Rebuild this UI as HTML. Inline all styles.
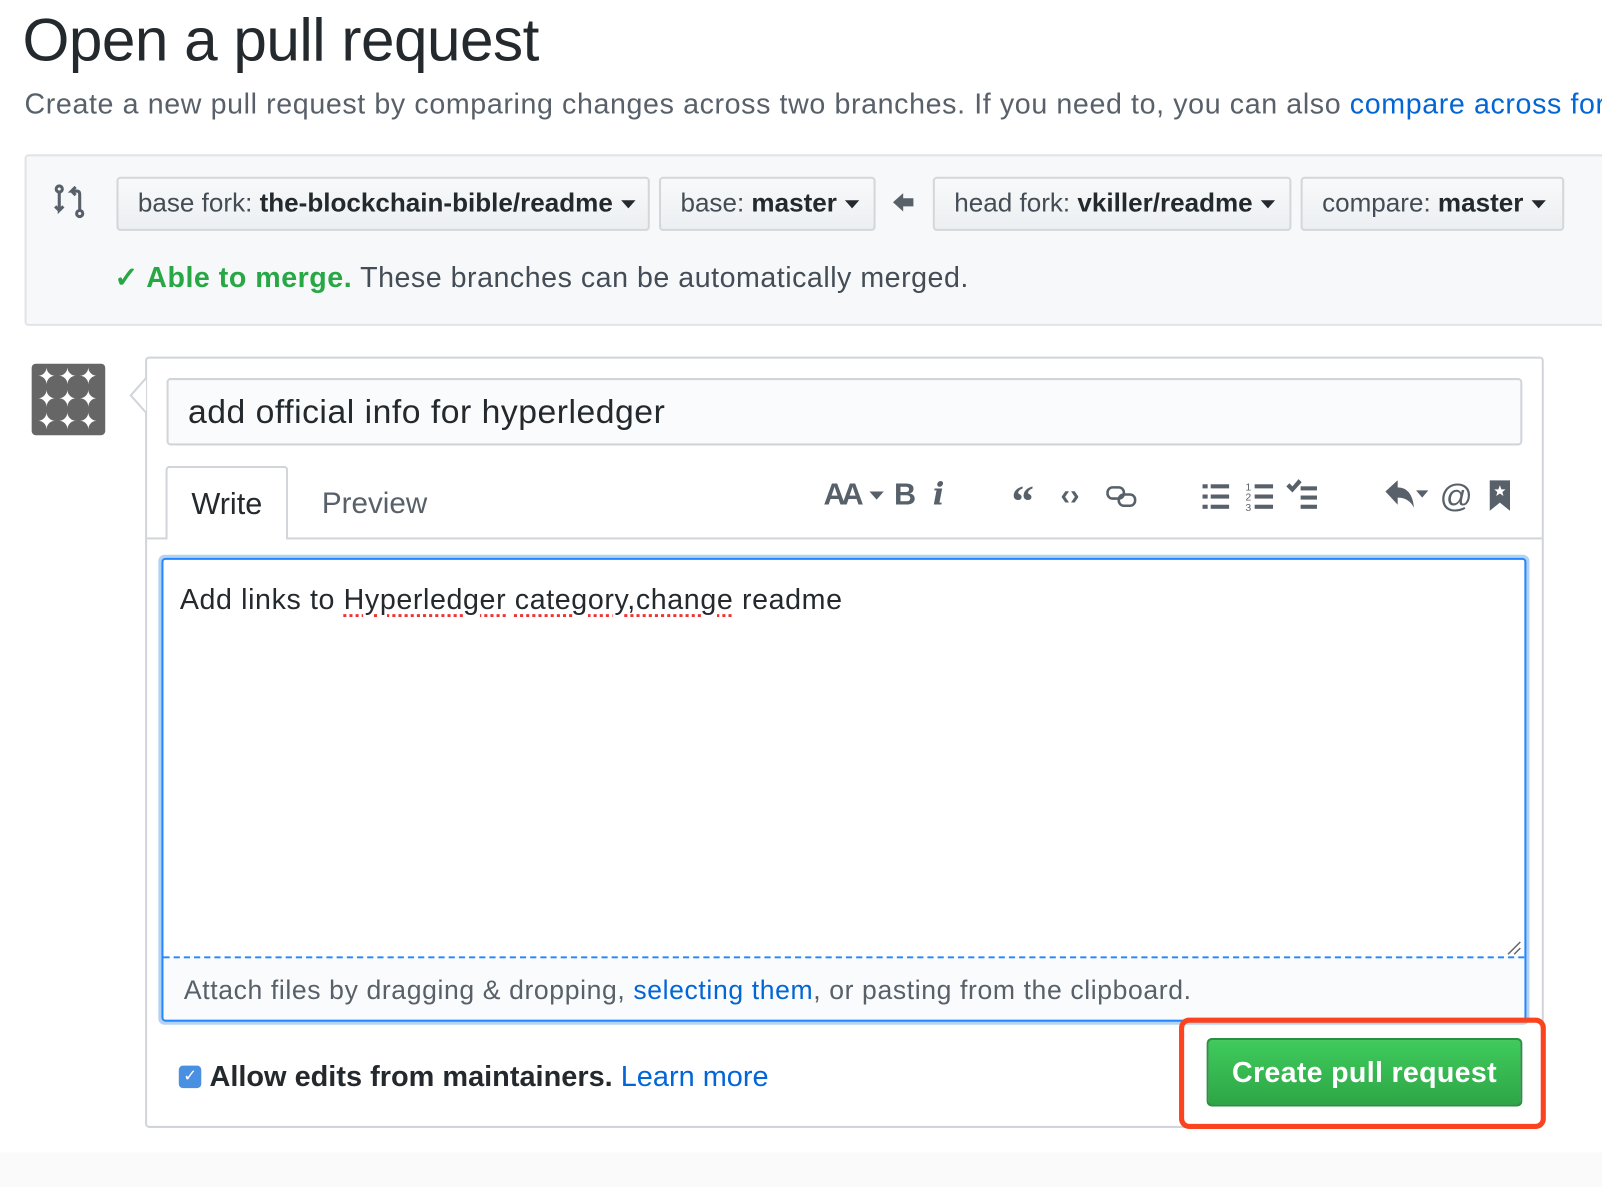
<!DOCTYPE html>
<html><head><meta charset="utf-8"><style>
*{box-sizing:border-box;margin:0;padding:0}
body{width:1602px;height:1160px;background:#fff;font-family:"Liberation Sans",sans-serif;color:#24292e;overflow:hidden}
#w{position:relative;width:1568px;height:1136px;transform:scale(1.0217);transform-origin:0 0}
.a{position:absolute;white-space:nowrap}
.btn{position:absolute;top:173px;height:53px;border:2px solid #d4d7da;border-radius:4px;background:linear-gradient(#f8f9fa,#eceff2);font-size:25.5px;line-height:49px;padding-left:19px;color:#444d56}
.btn b{color:#24292e}
.caret{display:inline-block;width:0;height:0;border-left:7px solid transparent;border-right:7px solid transparent;border-top:8px solid #24292e;vertical-align:middle;margin-left:8px}
.ic{position:absolute;color:#586069;font-size:30px;font-weight:bold;line-height:30px;top:470px}
</style></head><body><div id="w">
<div class="a" style="left:22px;top:6px;font-size:59px;line-height:66px;letter-spacing:-0.5px">Open a pull request</div>
<div class="a" style="left:24px;top:86px;font-size:28px;letter-spacing:0.6px;line-height:32px;color:#586069">Create a new pull request by comparing changes across two branches. If you need to, you can also <span style="color:#0366d6">compare across forks.</span></div>

<div class="a" style="left:24px;top:151px;width:1600px;height:168px;background:#f6f8fa;border:2px solid #e1e4e8;border-radius:4px"></div>
<svg class="a" style="left:52px;top:180px" width="34" height="36" viewBox="0 0 34 36" fill="none" stroke="#586069" stroke-width="3"><circle cx="6" cy="5" r="3"/><path d="M6 8v18l4-4M6 26l-4-4"/><circle cx="26" cy="29" r="3"/><path d="M26 26V10q0-3-3-3h-5l4-4M18 7l4 4"/></svg>
<div class="btn" style="left:114px;width:522px">base fork: <b>the-blockchain-bible/readme</b><span class="caret"></span></div>
<div class="btn" style="left:645px;width:212px">base: <b>master</b><span class="caret"></span></div>
<svg class="a" style="left:874px;top:188px" width="22" height="20" viewBox="0 0 22 20"><path d="M0 10L10 1v5h10v8H10v5z" fill="#586069"/></svg>
<div class="btn" style="left:913px;width:351px">head fork: <b>vkiller/readme</b><span class="caret"></span></div>
<div class="btn" style="left:1273px;width:258px">compare: <b>master</b><span class="caret"></span></div>
<div class="a" style="left:112px;top:255px;font-size:28px;letter-spacing:0.5px;line-height:34px;color:#444d56"><span style="color:#28a745;font-weight:bold">✓ Able to merge.</span> These branches can be automatically merged.</div>

<div class="a" style="left:31px;top:356px;width:72px;height:70px;background:#666;border-radius:4px;color:#fff;font-size:22px;line-height:22px;text-align:center;padding-top:2px;letter-spacing:2px">✦✦✦<br>✦✦✦<br>✦✦✦</div>

<div class="a" style="left:142px;top:349px;width:1369px;height:755px;border:2px solid #d1d5da;border-radius:4px;background:#fff"></div>
<svg class="a" style="left:126px;top:370px" width="20" height="34"><path d="M17 0L2 17L17 34" fill="#fff" stroke="#d1d5da" stroke-width="2"/></svg>
<div class="a" style="left:163px;top:370px;width:1327px;height:66px;border:2px solid #d1d5da;border-radius:4px;background:#fafbfc;font-size:33px;letter-spacing:0.5px;line-height:62px;padding-left:19px;color:#24292e">add official info for hyperledger</div>
<div class="a" style="left:144px;top:526px;width:1365px;height:2px;background:#d1d5da"></div>
<div class="a" style="left:162px;top:456px;width:120px;height:72px;background:#fff;border:2px solid #d1d5da;border-bottom:none;border-radius:4px 4px 0 0;font-size:30px;line-height:72px;text-align:center">Write</div>
<div class="a" style="left:315px;top:476px;font-size:29px;line-height:34px;color:#586069">Preview</div>

<div class="ic" style="left:806px;letter-spacing:-4px">AA</div><div class="a caret" style="left:843px;top:481px;border-top-color:#586069"></div>
<div class="ic" style="left:875px">B</div>
<div class="ic" style="left:913px;font-style:italic;font-family:'DejaVu Serif',serif">i</div>
<div class="ic" style="left:990px;font-size:44px;top:476px;font-family:'Liberation Serif',serif">“</div>
<div class="ic" style="left:1038px;font-size:28px">‹›</div>
<svg class="a" style="left:1082px;top:474px" width="32" height="24" fill="none" stroke="#586069" stroke-width="2.5"><rect x="2" y="3" width="16" height="11" rx="5"/><rect x="13" y="10" width="16" height="11" rx="5"/></svg>
<svg class="a" style="left:1176px;top:472px" width="30" height="28" fill="#586069"><rect x="1" y="2" width="5" height="4"/><rect x="9" y="2" width="18" height="4"/><rect x="1" y="12" width="5" height="4"/><rect x="9" y="12" width="18" height="4"/><rect x="1" y="22" width="5" height="4"/><rect x="9" y="22" width="18" height="4"/></svg>
<svg class="a" style="left:1219px;top:470px" width="30" height="30" fill="#586069"><text x="0" y="10" font-size="10" font-family="Liberation Sans">1</text><text x="0" y="20" font-size="10" font-family="Liberation Sans">2</text><text x="0" y="30" font-size="10" font-family="Liberation Sans">3</text><rect x="9" y="4" width="18" height="4"/><rect x="9" y="14" width="18" height="4"/><rect x="9" y="24" width="18" height="4"/></svg>
<svg class="a" style="left:1258px;top:468px" width="34" height="32" fill="#586069"><path d="M1 8l3-3 3 3 6-7 3 3-9 10z"/><rect x="15" y="8" width="16" height="4"/><rect x="15" y="17" width="16" height="4"/><rect x="15" y="26" width="16" height="4"/></svg>
<svg class="a" style="left:1356px;top:470px" width="44" height="30" fill="#586069"><path d="M0 11L12 0v7q14 0 16 20q-5-10-16-10v7z"/><path d="M30 10h12l-6 7z"/></svg>
<div class="ic" style="left:1409px;font-weight:normal;font-size:32px">@</div>
<svg class="a" style="left:1458px;top:470px" width="20" height="30" fill="#586069"><path d="M0 0h20v30l-10-8-10 8z"/><path d="M10 5l1.5 4h4l-3 2.5 1 4-3.5-2.5-3.5 2.5 1-4-3-2.5h4z" fill="#fff"/></svg>

<div class="a" style="left:155px;top:543px;width:1342px;height:460px;border:4px solid #b6d2f3;border-radius:6px"></div>
<div class="a" style="left:158px;top:546px;width:1336px;height:454px;border:2px solid #2188ff;border-radius:4px;background:#fff"></div>
<div class="a" style="left:176px;top:570px;font-size:28px;letter-spacing:0.6px;line-height:34px;color:#24292e">Add links to <span style="text-decoration:underline dotted #e33;text-underline-offset:5px">Hyperledger</span> <span style="text-decoration:underline dotted #e33;text-underline-offset:5px">category,change</span> readme</div>
<div class="a" style="left:160px;top:936px;width:1332px;height:62px;background:#fafbfc;border-top:2px dashed #2188ff;border-radius:0 0 3px 3px"></div>
<div class="a" style="left:180px;top:953px;font-size:26px;letter-spacing:0.6px;line-height:32px;color:#586069">Attach files by dragging &amp; dropping, <span style="color:#0366d6">selecting them</span>, or pasting from the clipboard.</div>
<svg class="a" style="left:1474px;top:920px" width="16" height="16" stroke="#666" stroke-width="1.5"><path d="M2 14L14 2M8 14L14 8"/></svg>

<div class="a" style="left:175px;top:1043px;width:22px;height:22px;background:#4a90e2;border-radius:4px;color:#fff;font-size:16px;line-height:22px;text-align:center">✓</div>
<div class="a" style="left:205px;top:1036px;font-size:28.3px;line-height:34px;font-weight:bold;color:#24292e">Allow edits from maintainers. <span style="font-weight:normal;color:#0366d6">Learn more</span></div>

<div class="a" style="left:1181px;top:1016px;width:309px;height:67px;background:linear-gradient(#3fcb5c,#2ea646);border:2px solid #2a9141;border-radius:5px;color:#fff;font-weight:bold;font-size:28px;letter-spacing:0.3px;line-height:63px;text-align:center">Create pull request</div>
<div class="a" style="left:1154px;top:996px;width:359px;height:109px;border:5px solid #fb431f;border-radius:10px"></div>
<div class="a" style="left:0;top:1128px;width:1602px;height:34px;background:#fafafa"></div>
</div></body></html>
